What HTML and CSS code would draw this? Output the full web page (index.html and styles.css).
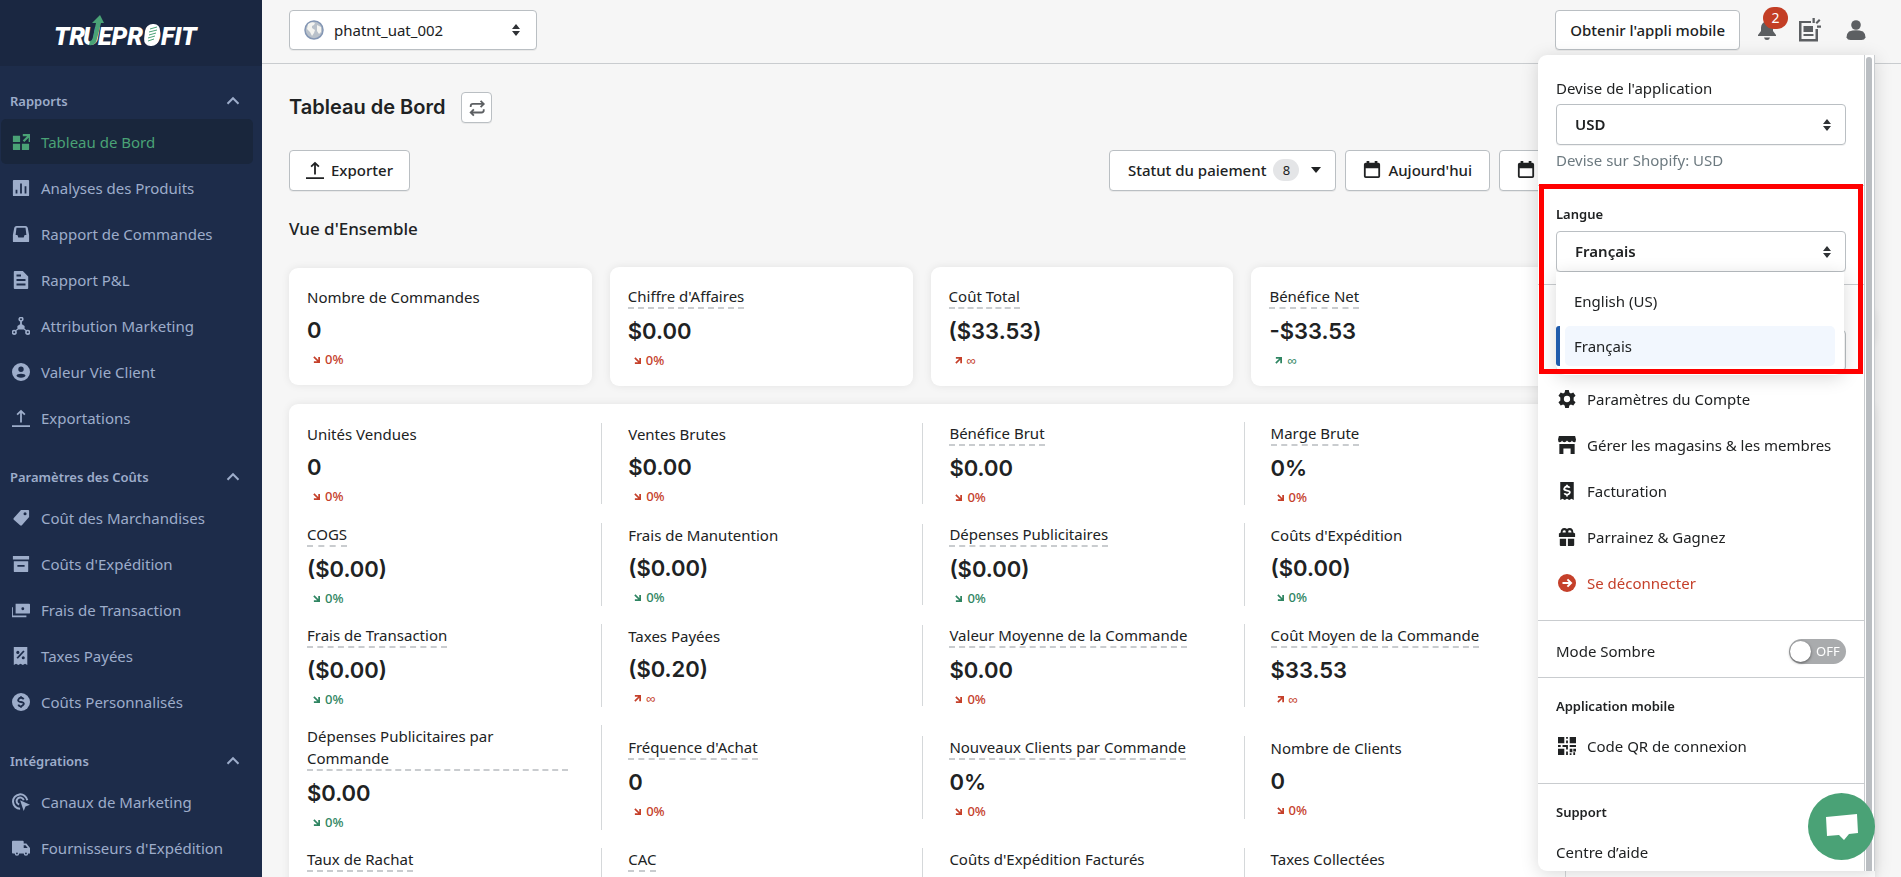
FILE: index.html
```
<!DOCTYPE html>
<html lang="fr">

<head>
  <meta charset="UTF-8">
  <meta name="viewport" content="width=device-width, initial-scale=1.0">
  <title>Tableau de Bord - TrueProfit</title>
  <link rel="stylesheet" href="styles.css">
</head>

<body>
  <!-- icon sprite -->
  <svg class="sprite" aria-hidden="true">
    <symbol id="up" viewBox="0 0 24 24"><path d="m6 15 6-6 6 6" fill="none" stroke="currentColor" stroke-width="2.2"/></symbol>
    <symbol id="dashboard" viewBox="0 0 20 20"><path d="M1 3h8v7H1zM1 12h8v7H2a1 1 0 0 1-1-1zM11 12h8v6a1 1 0 0 1-1 1h-7zM12 1h9v9h-2.500V5.300l-4.800 4.800-1.800-1.800 4.800-4.800H12z"/></symbol>
    <symbol id="chart" viewBox="0 0 20 20"><path fill-rule="evenodd" d="M2 1h16a1 1 0 0 1 1 1v16a1 1 0 0 1-1 1H2a1 1 0 0 1-1-1V2a1 1 0 0 1 1-1zm2 11v4h2v-4zm5-7v11h2V5zm5 3v8h2V8z"/></symbol>
    <symbol id="inbox" viewBox="0 0 20 20"><path fill-rule="evenodd" d="M5 1h10q2 0 2.500 2L19 11v7a1 1 0 0 1-1 1H2a1 1 0 0 1-1-1v-7l1.500-8Q3 1 5 1zm0 2-1 8h2l1 3h6l1-3h2l-1-8z"/></symbol>
    <symbol id="file" viewBox="0 0 20 20"><path fill-rule="evenodd" d="M3 0h9l6 6v13a1 1 0 0 1-1 1H3a1 1 0 0 1-1-1V1a1 1 0 0 1 1-1zm2 4v2h5V4zm0 5v2h10V9zm0 5v2h10v-2z"/></symbol>
    <symbol id="nodes" viewBox="0 0 20 20"><path d="M9 4h2v4l3 2v3l3 2-1 1-3-2H7l-3 2-1-1 3-2v-3l3-2z"/><g fill="none" stroke="currentColor" stroke-width="1.800"><circle cx="10" cy="2.500" r="2"/><circle cx="2.500" cy="17" r="2"/><circle cx="17.500" cy="17" r="2"/></g></symbol>
    <symbol id="person" viewBox="0 0 20 20"><path fill-rule="evenodd" d="M10 0a10 10 0 1 0 0 20 10 10 0 0 0 0-20zm0 4a3 3 0 1 1 0 6 3 3 0 0 1 0-6zm0 8c3 0 5 1 5 2s-2 2.500-5 2.500S5 15 5 14s2-2 5-2z"/></symbol>
    <symbol id="export" viewBox="0 0 20 20"><path d="M0 18h20v2H0zM9 15V4.500L6.400 7 5 5.500 10 .700l5 4.800L13.600 7 11 4.500V15z"/></symbol>
    <symbol id="tag" viewBox="0 0 20 20"><path fill-rule="evenodd" d="M10 1h8a1 1 0 0 1 1 1v7l-8 9q-1 1-2 0l-7-6q-1-1 0-2zm4.500 2.500a1.700 1.700 0 1 0 0 3.400 1.700 1.700 0 0 0 0-3.400z"/></symbol>
    <symbol id="box" viewBox="0 0 20 20"><path fill-rule="evenodd" d="M1 1h18v4H1zM2 7h16v11a1 1 0 0 1-1 1H3a1 1 0 0 1-1-1zm4 4v2h8v-2z"/></symbol>
    <symbol id="cash" viewBox="0 0 20 20"><path fill-rule="evenodd" d="M4 3h15a1 1 0 0 1 1 1v9a1 1 0 0 1-1 1H4zm8 4a1.600 1.600 0 1 0 0 3.200A1.600 1.600 0 0 0 12 7zM-1 7h2v9h15v2H0q-1 0-1-1z"/></symbol>
    <symbol id="tax" viewBox="0 0 20 20"><path d="M2 0h15v20l-2.500-1.500L12 20l-2.500-1.500L7 20l-2.500-1.500L2 20z"/><g class="cut"><circle cx="6.500" cy="6" r="1.700"/><circle cx="12.500" cy="12" r="1.700"/><path d="m5 12 7.500-8 1.500 1-7.500 8z"/></g></symbol>
    <symbol id="coin" viewBox="0 0 20 20"><circle cx="10" cy="10" r="10"/><path class="cut-line" d="M13 7q-1-1.700-3-1.700T7 7.300 10 10t3 2.500-3 2.300-3-1.800M10 3.500v2M10 14.500v2"/></symbol>
    <symbol id="target" viewBox="0 0 20 20"><g fill="none" stroke="currentColor" stroke-width="2.200"><path d="M9 17.500A8 8 0 1 1 17 8"/><path d="M8 12.800A4 4 0 1 1 13 8"/></g><path d="m9 8 11 5-5 2-2 5z"/></symbol>
    <symbol id="truck" viewBox="0 0 20 20"><path fill-rule="evenodd" d="M1 2h11a1 1 0 0 1 1 1v2h3l4 5v6h-2a2.500 2.500 0 0 1-5 0H8a2.500 2.500 0 0 1-5 0H1a1 1 0 0 1-1-1V3a1 1 0 0 1 1-1zm12 5v3h4.500L15 7zM5.500 15a1 1 0 1 0 0 2 1 1 0 0 0 0-2zm10 0a1 1 0 1 0 0 2 1 1 0 0 0 0-2z"/></symbol>
    <symbol id="swap" viewBox="0 0 20 20"><path d="M3 9V8q0-2.500 2.500-2.500H17M14 2l3.500 3.500L14 9M17.500 11.500v1q0 2.500-2.500 2.500H3M6.500 11.500 3 15l3.500 3.500" fill="none" stroke="currentColor" stroke-width="2"/></symbol>
    <symbol id="calendar" viewBox="0 0 20 20"><path fill-rule="evenodd" d="M4 0h3v2h6V0h3v2h1a2 2 0 0 1 2 2v13a2 2 0 0 1-2 2H3a2 2 0 0 1-2-2V4a2 2 0 0 1 2-2h1zM3 8v9h14V8z"/></symbol>
    <symbol id="bell" viewBox="0 0 20 20"><path d="M10 0q1.500 0 1.500 1.500Q16 3 16 8v3l3 4v1H1v-1l3-4V8q0-5 4.500-6.500Q8.500 0 10 0zM7 17.500h6q-.5 2.500-3 2.500t-3-2.500z"/></symbol>
    <symbol id="news" viewBox="0 0 24 24"><path fill-rule="evenodd" d="M2 3h12v2H4.500v16h14V11H21v12.500H2zM6.500 8h9.500v6H6.500zm0 8h10v2h-10z"/><path d="M15.500 0h2.300v5h-2.300zM22 1l1.500 1.500L20 6l-1.500-1.500zM20 7.500h4.500v2.300H20z"/></symbol>
    <symbol id="user" viewBox="0 0 20 20"><circle cx="10" cy="5" r="4.800"/><path d="M3 11.500q7-2.500 14 0 2.500 2 2.500 6-1 2.500-4 2.500h-11q-3 0-4-2.500 0-4 2.500-6z"/></symbol>
    <symbol id="gear" viewBox="0 0 20 20"><path fill-rule="evenodd" d="M8 0h4l.6 2.800 1.700 1L17 2.900l2.500 3.500-2.100 1.900v3.400l2.100 1.900-2.500 3.500-2.700-.9-1.700 1L12 20H8l-.6-2.800-1.700-1-2.700.9-2.500-3.500 2.100-1.900V8.300L.5 6.400 3 2.900l2.700.9 1.700-1zM10 6.500a3.500 3.500 0 1 0 0 7 3.500 3.500 0 0 0 0-7z"/></symbol>
    <symbol id="store" viewBox="0 0 20 20"><path d="M1 0h18l1 4q0 3-2 3-2 0-2.500-2Q15 7 13 7q-2 0-3-2-1 2-3 2-2 0-2.500-2Q4 7 2 7 0 7 0 4zM1.500 9h17v11H14v-6H6v6H1.500z"/></symbol>
    <symbol id="bill" viewBox="0 0 20 20"><path d="M2.500 0h15v20L15 18.500 12.500 20 10 18.500 7.500 20 5 18.500 2.500 20z"/><path class="cut-line" d="M13 6.500Q12 5 10 5T7 7t3 2.500 3 2.500-3 2-3-1.500M10 3v2M10 14v2"/></symbol>
    <symbol id="gift" viewBox="0 0 20 20"><path fill-rule="evenodd" d="M3 5q0-5 4-5 2 0 3 1 1-1 3-1 4 0 4 5l2 1v4H1V6zm4-2.500Q5 2.500 5 5h3.500Q9 2.500 7 2.500zm6 0q-2 0-1.500 2.500H15q0-2.500-2-2.500zM2 12h7v8H3q-1 0-1-1zm9 0h7v7q0 1-1 1h-6z"/></symbol>
    <symbol id="logout" viewBox="0 0 20 20"><circle cx="10" cy="10" r="10"/><path d="M5 10h9M10.500 6l4 4-4 4" fill="none" stroke="#fff" stroke-width="2.200"/></symbol>
    <symbol id="qr" viewBox="0 0 20 20"><path d="M0 0h7v7H0zM13 0h7v7h-7zM0 13h7v7H0zM9 0h2v2H9zM9 4h2v3H9zM0 9h3v2H0zM5 9h6v5H9v-3H5zM13 9h7v2h-7zM9 16h2v4H9zM13 13h3v4h-3zM17 13h3v3h-3zM13 18h2v2h-2zM17 17h2v3h-2z"/></symbol>
    <symbol id="trend-down" viewBox="0 0 8 8"><path d="m1 1 5 5M7 1v6H1" fill="none" stroke="currentColor" stroke-width="2"/></symbol>
    <symbol id="trend-up" viewBox="0 0 8 8"><path d="m1 7 5-5M1 1h6v6" fill="none" stroke="currentColor" stroke-width="2"/></symbol>
  </svg>

  <div class="app">
    <aside class="sidebar">
      <div class="logo">
        <svg width="146" height="36" viewBox="0 0 146 36" role="img" aria-label="TrueProfit">
          <text y="33" class="logo-text"><tspan x="0">TR</tspan><tspan x="29">U</tspan><tspan x="44">EPR</tspan><tspan x="90">O</tspan><tspan x="107">FIT</tspan></text>
          <path d="m46 3 4 8h-3l-4 16q-1 7-8 6l1-4q2 0 3-4l3-14h-4z" fill="#4aa276"/>
          <rect x="93" y="12" width="15" height="22" rx="7" fill="#fff" transform="skewX(-6)"/>
          <path d="m95 18 7-2m-8 5 8-2m-8 5 7-2m-8 5 7-2m-7 5 6-2" transform="translate(1 -1)" stroke="#4aa276"/>
        </svg>
      </div>
      <nav class="menu">
        <section class="menu-group">
          <button class="menu-title" type="button">Rapports <svg><use href="#up"/></svg></button>
          <a class="menu-item active" href="#"><svg><use href="#dashboard"/></svg>Tableau de Bord</a>
          <a class="menu-item" href="#"><svg><use href="#chart"/></svg>Analyses des Produits</a>
          <a class="menu-item" href="#"><svg><use href="#inbox"/></svg>Rapport de Commandes</a>
          <a class="menu-item" href="#"><svg><use href="#file"/></svg>Rapport P&amp;L</a>
          <a class="menu-item" href="#"><svg><use href="#nodes"/></svg>Attribution Marketing</a>
          <a class="menu-item" href="#"><svg><use href="#person"/></svg>Valeur Vie Client</a>
          <a class="menu-item" href="#"><svg><use href="#export"/></svg>Exportations</a>
        </section>
        <section class="menu-group">
          <button class="menu-title" type="button">Paramètres des Coûts <svg><use href="#up"/></svg></button>
          <a class="menu-item" href="#"><svg><use href="#tag"/></svg>Coût des Marchandises</a>
          <a class="menu-item" href="#"><svg><use href="#box"/></svg>Coûts d'Expédition</a>
          <a class="menu-item" href="#"><svg><use href="#cash"/></svg>Frais de Transaction</a>
          <a class="menu-item" href="#"><svg><use href="#tax"/></svg>Taxes Payées</a>
          <a class="menu-item" href="#"><svg><use href="#coin"/></svg>Coûts Personnalisés</a>
        </section>
        <section class="menu-group">
          <button class="menu-title" type="button">Intégrations <svg><use href="#up"/></svg></button>
          <a class="menu-item" href="#"><svg><use href="#target"/></svg>Canaux de Marketing</a>
          <a class="menu-item" href="#"><svg><use href="#truck"/></svg>Fournisseurs d'Expédition</a>
        </section>
      </nav>
    </aside>

    <div class="page">
      <header class="topbar">
        <div class="store">
          <svg class="globe" viewBox="0 0 20 20" aria-hidden="true">
            <circle cx="10" cy="10" r="9" fill="#b9c1ca" stroke="#8396b4" stroke-width="1.500"/>
            <path d="M4 4q4-3 7-1l-1 2-2 1v2l3 2-1 3-2 3-2-4-3-3zM13 5l4 2v5l-2 2-2-3z" fill="#f4f4f0"/>
          </svg>
          <select class="store-select" aria-label="Boutique">
            <option>phatnt_uat_002</option>
          </select>
        </div>
        <div class="topbar-actions">
          <button class="btn" type="button">Obtenir l'appli mobile</button>
          <button class="icon-btn bell" type="button" aria-label="Notifications"><svg><use href="#bell"/></svg><span class="badge">2</span></button>
          <button class="icon-btn news" type="button" aria-label="Nouveautés"><svg><use href="#news"/></svg></button>
          <button class="icon-btn" type="button" aria-label="Compte"><svg><use href="#user"/></svg></button>
        </div>
      </header>

      <main class="content">
        <div class="title-row">
          <h1>Tableau de Bord</h1>
          <button class="btn swap" type="button" aria-label="Changer de vue"><svg><use href="#swap"/></svg></button>
        </div>
        <div class="toolbar">
          <button class="btn export" type="button"><svg><use href="#export"/></svg>Exporter</button>
          <div class="filters">
            <button class="btn status" type="button">Statut du paiement <span class="count">8</span><span class="caret"></span></button>
            <button class="btn" type="button"><svg><use href="#calendar"/></svg>Aujourd'hui</button>
            <button class="btn compare" type="button" aria-label="Comparer"><svg><use href="#calendar"/></svg></button>
          </div>
        </div>
        <h2>Vue d'Ensemble</h2>

        <div class="cards">
          <div class="card metric"><span class="label">Nombre de Commandes</span><b class="value">0</b><span class="trend bad"><svg><use href="#trend-down"/></svg>0%</span></div>
          <div class="card metric"><span class="label hint">Chiffre d'Affaires</span><b class="value">$0.00</b><span class="trend bad"><svg><use href="#trend-down"/></svg>0%</span></div>
          <div class="card metric"><span class="label hint">Coût Total</span><b class="value">($33.53)</b><span class="trend bad"><svg><use href="#trend-up"/></svg>∞</span></div>
          <div class="card metric"><span class="label hint">Bénéfice Net</span><b class="value">-$33.53</b><span class="trend good"><svg><use href="#trend-up"/></svg>∞</span></div>
          <div class="card"></div>
        </div>

        <div class="details">
          <div class="metric"><span class="label">Unités Vendues</span><b class="value">0</b><span class="trend bad"><svg><use href="#trend-down"/></svg>0%</span></div>
          <div class="metric"><span class="label">Ventes Brutes</span><b class="value">$0.00</b><span class="trend bad"><svg><use href="#trend-down"/></svg>0%</span></div>
          <div class="metric"><span class="label hint">Bénéfice Brut</span><b class="value">$0.00</b><span class="trend bad"><svg><use href="#trend-down"/></svg>0%</span></div>
          <div class="metric"><span class="label hint">Marge Brute</span><b class="value">0%</b><span class="trend bad"><svg><use href="#trend-down"/></svg>0%</span></div>
          <div class="metric"></div>

          <div class="metric"><span class="label hint">COGS</span><b class="value">($0.00)</b><span class="trend good"><svg><use href="#trend-down"/></svg>0%</span></div>
          <div class="metric"><span class="label">Frais de Manutention</span><b class="value">($0.00)</b><span class="trend good"><svg><use href="#trend-down"/></svg>0%</span></div>
          <div class="metric"><span class="label hint">Dépenses Publicitaires</span><b class="value">($0.00)</b><span class="trend good"><svg><use href="#trend-down"/></svg>0%</span></div>
          <div class="metric"><span class="label">Coûts d'Expédition</span><b class="value">($0.00)</b><span class="trend good"><svg><use href="#trend-down"/></svg>0%</span></div>
          <div class="metric"></div>

          <div class="metric"><span class="label hint">Frais de Transaction</span><b class="value">($0.00)</b><span class="trend good"><svg><use href="#trend-down"/></svg>0%</span></div>
          <div class="metric"><span class="label">Taxes Payées</span><b class="value">($0.20)</b><span class="trend bad"><svg><use href="#trend-up"/></svg>∞</span></div>
          <div class="metric"><span class="label hint">Valeur Moyenne de la Commande</span><b class="value">$0.00</b><span class="trend bad"><svg><use href="#trend-down"/></svg>0%</span></div>
          <div class="metric"><span class="label hint">Coût Moyen de la Commande</span><b class="value">$33.53</b><span class="trend bad"><svg><use href="#trend-up"/></svg>∞</span></div>
          <div class="metric"></div>

          <div class="metric"><span class="label hint">Dépenses Publicitaires par Commande</span><b class="value">$0.00</b><span class="trend good"><svg><use href="#trend-down"/></svg>0%</span></div>
          <div class="metric"><span class="label hint">Fréquence d'Achat</span><b class="value">0</b><span class="trend bad"><svg><use href="#trend-down"/></svg>0%</span></div>
          <div class="metric"><span class="label hint">Nouveaux Clients par Commande</span><b class="value">0%</b><span class="trend bad"><svg><use href="#trend-down"/></svg>0%</span></div>
          <div class="metric"><span class="label">Nombre de Clients</span><b class="value">0</b><span class="trend bad"><svg><use href="#trend-down"/></svg>0%</span></div>
          <div class="metric"></div>

          <div class="metric"><span class="label hint">Taux de Rachat</span></div>
          <div class="metric"><span class="label hint">CAC</span></div>
          <div class="metric"><span class="label">Coûts d'Expédition Facturés</span></div>
          <div class="metric"><span class="label">Taxes Collectées</span></div>
          <div class="metric"></div>
        </div>
      </main>
    </div>
  </div>

  <!-- account menu -->
  <div class="account">
    <div class="account-body">
      <section class="block currency">
        <label for="currency">Devise de l'application</label>
        <select id="currency" class="select">
          <option>USD</option>
        </select>
        <p class="help">Devise sur Shopify: USD</p>
      </section>
      <section class="block language">
        <label class="block-title" for="language">Langue</label>
        <div class="language-field">
          <select id="language" class="select">
            <option>Français</option>
            <option>English (US)</option>
          </select>
          <ul class="options">
            <li><button type="button">English (US)</button></li>
            <li class="selected"><button type="button">Français</button></li>
          </ul>
        </div>
        <div class="highlight"></div>
      </section>
      <section class="block profile">
        <select class="select" aria-label="Boutique active">
          <option></option>
        </select>
        <a class="link" href="#"><svg><use href="#gear"/></svg>Paramètres du Compte</a>
        <a class="link" href="#"><svg><use href="#store"/></svg>Gérer les magasins &amp; les membres</a>
        <a class="link" href="#"><svg><use href="#bill"/></svg>Facturation</a>
        <a class="link" href="#"><svg><use href="#gift"/></svg>Parrainez &amp; Gagnez</a>
        <a class="link logout" href="#"><svg><use href="#logout"/></svg>Se déconnecter</a>
      </section>
      <section class="block dark-mode">
        <label for="dark">Mode Sombre</label>
        <label class="switch" for="dark"><input id="dark" type="checkbox">OFF</label>
      </section>
      <section class="block mobile">
        <h3 class="block-title">Application mobile</h3>
        <a class="link" href="#"><svg><use href="#qr"/></svg>Code QR de connexion</a>
      </section>
      <section class="block support">
        <h3 class="block-title">Support</h3>
        <a class="link" href="#">Centre d’aide</a>
      </section>
    </div>
    <div class="scrollbar"></div>
  </div>

  <button class="chat" type="button" aria-label="Chat">
    <svg viewBox="0 0 34 30"><path d="m1 5 31-3 1 19-9 1-5 6-5-5-12 1z" fill="#fff"/></svg>
  </button>
</body>

</html>
```
FILE: styles.css
```
* {
  box-sizing: border-box;
  margin: 0;
  padding: 0;
}

html,
body {
  height: 100%;
}

body {
  overflow: hidden;
  font: 15px/22px "Noto Sans", sans-serif;
  color: #202223;
  background: #f6f6f6;
}

button,
select {
  font: inherit;
  color: inherit;
}

button {
  cursor: pointer;
}

a {
  color: inherit;
  text-decoration: none;
}

svg {
  flex: none;
  fill: currentColor;
}

.sprite {
  display: none;
}

.app {
  display: flex;
  height: 100%;
  overflow: hidden;
}

/* sidebar */
.sidebar {
  --cut: #1d2c4a;
  flex: none;
  width: 262px;
  overflow: hidden;
  color: #9dadca;
  background: #1d2c4a;
}

.logo {
  display: flex;
  align-items: center;
  justify-content: center;
  height: 66px;
  padding-right: 8px;
  padding-bottom: 6px;
  background: #1a2741;
}

.logo svg {
  overflow: visible;
}

.logo-text {
  font: italic 900 25px Roboto, sans-serif;
  fill: #fff;
}

.menu {
  display: flex;
  flex-direction: column;
  gap: 20px;
  padding: 18px 9px 0 1px;
}

.menu-group {
  display: flex;
  flex-direction: column;
  gap: 1px;
}

.menu-title {
  display: flex;
  align-items: center;
  justify-content: space-between;
  height: 34px;
  padding: 0 9px;
  border: 0;
  background: none;
  font-size: 13px;
  font-weight: 600;
}

.menu-title svg {
  width: 22px;
  height: 22px;
}

.menu-item {
  display: flex;
  align-items: center;
  gap: 11px;
  height: 45px;
  padding-left: 11px;
  border-radius: 5px;
}

.menu-item svg {
  width: 18px;
  height: 18px;
  overflow: visible;
}

.menu-item.active {
  color: #4aa276;
  background: #19263c;
}

.cut {
  fill: var(--cut);
}

.cut-line {
  fill: none;
  stroke: var(--cut);
  stroke-width: 2;
}

/* top bar */
.page {
  flex: 1;
  min-width: 0;
}

.topbar {
  display: flex;
  align-items: center;
  justify-content: space-between;
  height: 64px;
  padding: 0 35px 4px 27px;
  border-bottom: 1px solid #c9cccf;
}

.store {
  display: grid;
  align-items: center;
  width: 248px;
}

.store > * {
  grid-area: 1 / 1;
}

.globe {
  z-index: 1;
  width: 20px;
  height: 20px;
  margin-left: 15px;
}

.store-select,
.select {
  appearance: none;
  width: 100%;
  height: 41px;
  padding-bottom: 2px;
  border: 1px solid #babfc3;
  border-radius: 4px;
  background: #fff url("data:image/svg+xml,%3Csvg xmlns='http://www.w3.org/2000/svg' width='8' height='12'%3E%3Cpath d='M0 5l4-5 4 5zM0 7h8l-4 5z' fill='%23303336'/%3E%3C/svg%3E") no-repeat right 14px center;
  box-shadow: 0 1px 0 rgba(0, 0, 0, .05);
}

.store-select {
  height: 40px;
  padding: 0 0 0 44px;
  background-position: right 16px center;
}

.topbar-actions {
  display: flex;
  align-items: center;
  gap: 16px;
}

.btn {
  display: flex;
  align-items: center;
  justify-content: center;
  gap: 7px;
  height: 41px;
  padding: 0 17px 1px;
  border: 1px solid #babfc3;
  border-radius: 4px;
  background: #fff;
  box-shadow: 0 1px 0 rgba(0, 0, 0, .05);
  font-weight: 500;
  white-space: nowrap;
}

.btn svg {
  width: 18px;
  height: 18px;
}

.topbar .btn {
  height: 40px;
  padding: 0 14px;
}

.icon-btn {
  position: relative;
  display: flex;
  border: 0;
  background: none;
  color: #5c5f62;
}

.icon-btn svg {
  width: 20px;
  height: 20px;
}

.icon-btn.bell {
  margin-left: 1px;
}

.icon-btn.news {
  margin: 0 9px 0 4px;
}

.icon-btn.news svg {
  width: 24px;
  height: 24px;
}

.badge {
  position: absolute;
  top: -13px;
  left: 6px;
  width: 25px;
  border-radius: 13px;
  color: #fff;
  background: #c33e25;
  font-size: 14px;
  line-height: 22px;
}

/* content */
.content {
  padding: 28px 26px 0 27px;
}

.title-row {
  display: flex;
  align-items: center;
  gap: 16px;
}

h1 {
  font: 600 20px/31px Inter, sans-serif;
}

.btn.swap {
  width: 31px;
  height: 31px;
  padding: 0;
  color: #5c5f62;
}

.toolbar {
  display: flex;
  justify-content: space-between;
  margin-top: 27px;
}

.filters {
  display: flex;
  gap: 9px;
}

.btn.export {
  padding: 0 16px 1px;
}

.btn.status {
  padding: 0 14px 1px 18px;
}

.count {
  width: 26px;
  border-radius: 12px;
  background: #e4e5e7;
  font-size: 13px;
  font-weight: 400;
}

.caret {
  margin-left: 5px;
  border: 5px solid transparent;
  border-top: 6px solid #202223;
  border-bottom: 0;
}

.btn.compare {
  justify-content: flex-start;
  width: 376px;
}

h2 {
  margin: 26px 0;
  font-size: 17px;
  font-weight: 500;
  line-height: 24px;
}

.cards {
  display: grid;
  grid-template-columns: repeat(5, 1fr);
  gap: 18px;
  align-items: center;
}

.card {
  padding: 18px;
  border-radius: 9px;
  background: #fff;
  box-shadow: 0 0 9px rgba(0, 0, 0, .08);
}

.metric {
  display: flex;
  flex-direction: column;
  align-items: flex-start;
}

.label.hint {
  border-bottom: 2px dashed #c9cccf;
}

.value {
  margin: 8px 0 7px;
  font: 600 22px/28px Inter, sans-serif;
}

.trend {
  display: flex;
  align-items: center;
  gap: 5px;
  padding-left: 6px;
  font-size: 13px;
  font-weight: 500;
  line-height: 16px;
}

.trend svg {
  width: 7px;
  height: 7px;
}

.bad {
  color: #c5402a;
}

.good {
  color: #2f8562;
}

.details {
  display: grid;
  grid-template-columns: repeat(5, 1fr);
  gap: 18px 56px;
  align-items: center;
  margin-top: 18px;
  padding: 18px;
  border-radius: 9px;
  background: #fff;
  box-shadow: 0 0 9px rgba(0, 0, 0, .08);
}

/* the divider sits in the column gap */
.details .metric {
  min-height: 81px;
  margin-right: -30px;
  padding-right: 33px;
  border-right: 1px solid #d5d8da;
}

.details .metric:nth-child(5n) {
  border: 0;
}

/* account menu */
.account {
  position: fixed;
  top: 55px;
  right: 26px;
  bottom: 6px;
  display: flex;
  width: 337px;
  overflow: hidden;
  border-radius: 9px 0 0 9px;
  background: #fff;
  box-shadow: 0 3px 18px rgba(0, 0, 0, .15);
}

.account-body {
  --cut: #fff;
  flex: 1;
  min-width: 0;
}

.scrollbar {
  width: 11px;
  padding: 2px 2px 0 1px;
  border-left: 1px solid #c9cccf;
  border-right: 1px solid #c9cccf;
}

.scrollbar::before {
  content: "";
  display: block;
  height: 100%;
  border-radius: 4px 4px 0 0;
  background: #babec2;
}

.block {
  padding: 0 18px;
  border-bottom: 1px solid #c9cccf;
}

.block:last-child {
  border: 0;
}

.block-title {
  display: block;
  font-size: 13px;
  font-weight: 600;
  line-height: 18px;
}

.select {
  display: block;
  padding-left: 18px;
  font-weight: 600;
}

.currency {
  padding-top: 22px;
  padding-bottom: 14px;
}

.currency label {
  display: block;
  margin-bottom: 5px;
}

.help {
  margin-top: 4px;
  color: #6d7a80;
}

.language {
  position: relative;
  padding-top: 19px;
  padding-bottom: 12px;
}

.language .block-title {
  margin-bottom: 8px;
}

.language-field {
  position: relative;
}

.options {
  position: absolute;
  z-index: 1;
  top: 100%;
  left: 0;
  right: 2px;
  padding: 9px 0;
  list-style: none;
  border-radius: 0 0 9px 9px;
  background: #fff;
  box-shadow: 0 3px 18px rgba(0, 0, 0, .15);
}

.options li {
  padding: 0 9px;
}

.options li + li {
  margin-top: 5px;
}

.options button {
  width: 100%;
  height: 40px;
  padding-left: 9px;
  border: 0;
  border-radius: 5px;
  background: none;
  text-align: left;
}

.options .selected {
  padding-left: 5px;
  border-left: 4px solid #1f5bab;
  border-radius: 3px 0 0 3px;
}

.options .selected button {
  background: #f2f7fe;
}

.highlight {
  position: absolute;
  z-index: 2;
  top: -2px;
  left: 1px;
  right: 1px;
  height: 190px;
  border: 5px solid #f00;
}

.profile {
  padding-top: 45px;
  padding-bottom: 14px;
}

.profile .select {
  margin-bottom: 5px;
}

.link {
  display: flex;
  align-items: center;
  gap: 11px;
  height: 46px;
  padding-left: 2px;
}

.link svg {
  width: 18px;
  height: 18px;
}

.logout {
  color: #c5402a;
}

.dark-mode {
  display: flex;
  align-items: center;
  justify-content: space-between;
  height: 57px;
  padding-top: 4px;
}

.switch {
  display: flex;
  align-items: center;
  gap: 5px;
  width: 57px;
  height: 25px;
  padding-left: 1px;
  border-radius: 13px;
  color: #fff;
  background: #a9abad;
  font-size: 13px;
}

.switch input {
  appearance: none;
  width: 21px;
  height: 21px;
  border-radius: 50%;
  background: #fff;
  box-shadow: 0 1px 3px rgba(0, 0, 0, .5);
}

.mobile {
  padding-top: 19px;
  padding-bottom: 14px;
}

.mobile .link,
.support .link {
  margin-top: 8px;
}

.support {
  padding-top: 19px;
}

.support .link {
  padding-left: 0;
}

.chat {
  position: fixed;
  right: 26px;
  bottom: 17px;
  display: flex;
  align-items: center;
  justify-content: center;
  width: 67px;
  height: 67px;
  border: 0;
  border-radius: 50%;
  background: #4aa276;
}

.chat svg {
  width: 34px;
  height: 30px;
}
```
